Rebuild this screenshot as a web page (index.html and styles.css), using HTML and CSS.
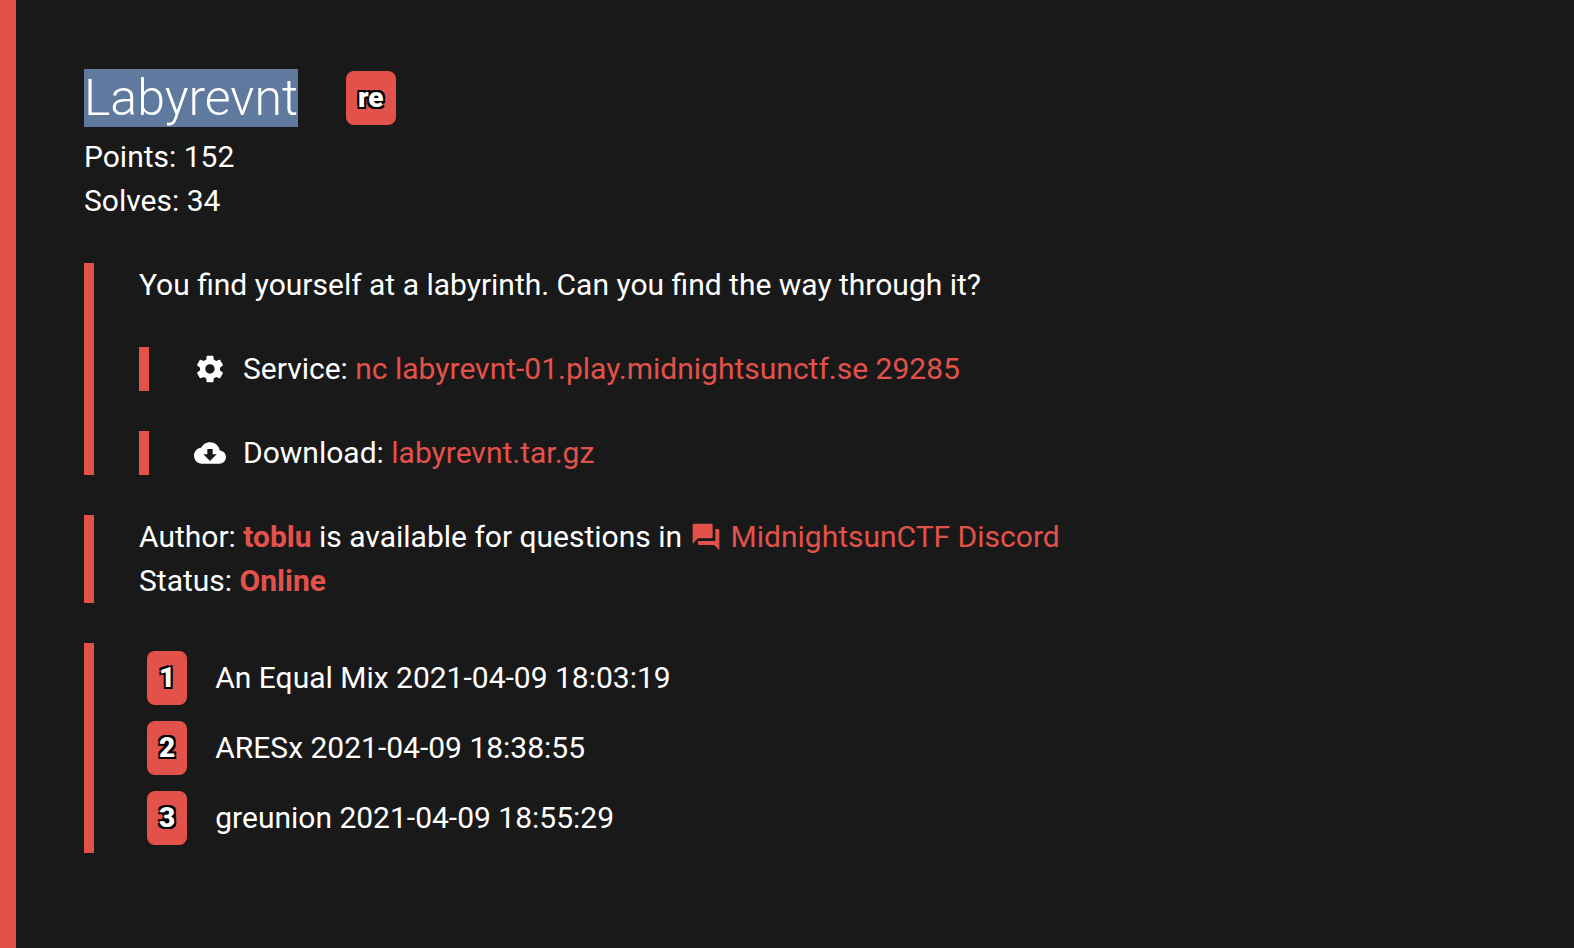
FILE: index.html
```html
<!DOCTYPE html>
<html lang="en">
<head>
<meta charset="utf-8">
<meta name="viewport" content="width=device-width, initial-scale=1">
<title>Labyrevnt</title>
<link rel="stylesheet" href="styles.css">
</head>
<body>
<main class="challenge">
  <header>
    <div class="heading">
      <h1 class="title"><mark class="selected">Labyrevnt</mark></h1>
      <span class="badge">re</span>
    </div>
    <p class="line">Points: 152</p>
    <p class="line">Solves: 34</p>
  </header>

  <section class="block details">
    <p class="line">You find yourself at a labyrinth. Can you find the way through it?</p>
    <div class="block resource">
      <svg class="icon" viewBox="0 0 24 24" aria-hidden="true"><path d="M19.43 12.98c.04-.32.07-.64.07-.98s-.03-.66-.07-.98l2.11-1.65c.19-.15.24-.42.12-.64l-2-3.46c-.12-.22-.39-.3-.61-.22l-2.49 1c-.52-.4-1.08-.73-1.69-.98l-.38-2.65C14.46 2.18 14.25 2 14 2h-4c-.25 0-.46.18-.49.42l-.38 2.65c-.61.25-1.17.59-1.69.98l-2.49-1c-.23-.09-.49 0-.61.22l-2 3.46c-.13.22-.07.49.12.64l2.11 1.65c-.04.32-.07.65-.07.98s.03.66.07.98l-2.11 1.65c-.19.15-.24.42-.12.64l2 3.46c.12.22.39.3.61.22l2.49-1c.52.4 1.08.73 1.69.98l.38 2.65c.03.24.24.42.49.42h4c.25 0 .46-.18.49-.42l.38-2.65c.61-.25 1.17-.59 1.69-.98l2.49 1c.23.09.49 0 .61-.22l2-3.46c.12-.22.07-.49-.12-.64l-2.11-1.65zM12 15.5c-1.93 0-3.500-1.570-3.500-3.500s1.570-3.500 3.500-3.500 3.500 1.570 3.500 3.500-1.570 3.500-3.500 3.500z"/></svg>
      <p class="line">Service: <a class="link" href="#service">nc labyrevnt-01.play.midnightsunctf.se 29285</a></p>
    </div>
    <div class="block resource">
      <svg class="icon" viewBox="0 0 24 24" aria-hidden="true"><path d="M19.350 10.040C18.670 6.590 15.640 4 12 4 9.110 4 6.600 5.640 5.350 8.040 2.340 8.360 0 10.910 0 14c0 3.310 2.690 6 6 6h13c2.760 0 5-2.240 5-5 0-2.640-2.050-4.780-4.650-4.960zM17 13l-5 5-5-5h3V9h4v4h3z"/></svg>
      <p class="line">Download: <a class="link" href="#download">labyrevnt.tar.gz</a></p>
    </div>
  </section>

  <section class="block">
    <p class="line">Author: <strong class="accent">toblu</strong> is available for questions in <a class="link" href="#discord"><svg class="icon chat" viewBox="0 0 24 24" aria-hidden="true"><path d="M21 6h-2v9H6v2c0 .55.45 1 1 1h11l4 4V7c0-.55-.45-1-1-1zm-4 6V3c0-.55-.45-1-1-1H3c-.55 0-1 .45-1 1v14l4-4h10c.55 0 1-.45 1-1z"/></svg>MidnightsunCTF Discord</a></p>
    <p class="line">Status: <strong class="accent">Online</strong></p>
  </section>

  <ol class="block solvers">
    <li class="solver"><span class="badge">1</span><span>An Equal Mix 2021-04-09 18:03:19</span></li>
    <li class="solver"><span class="badge">2</span><span>ARESx 2021-04-09 18:38:55</span></li>
    <li class="solver"><span class="badge">3</span><span>greunion 2021-04-09 18:55:29</span></li>
  </ol>
</main>
</body>
</html>
```
FILE: styles.css
```css
:root {
  --accent: #e3524a;
  --surface: #191919;
}

* {
  box-sizing: border-box;
}

body {
  margin: 0;
  background: var(--surface);
  color: #fff;
  font: 400 30px/44px Roboto, sans-serif;
}

.challenge {
  display: flex;
  flex-direction: column;
  gap: 40px;
  min-height: 100vh;
  padding: 61px 68px;
  border-left: 16px solid var(--accent);
}

.heading {
  display: flex;
  align-items: center;
  gap: 48px;
}

.title {
  margin: 0;
  font-size: 50px;
  font-weight: 300;
  line-height: 74px;
}

.selected {
  background: #5f7a9e;
  color: #fff;
}

.line {
  margin: 0;
}

.block {
  margin: 0;
  padding: 0 0 0 45px;
  border-left: 10px solid var(--accent);
}

.details {
  display: flex;
  flex-direction: column;
  gap: 40px;
}

.resource {
  display: flex;
  align-items: center;
  gap: 17px;
}

.icon {
  flex: none;
  width: 32px;
  height: 32px;
  fill: currentColor;
}

.chat {
  margin-right: 9px;
  vertical-align: -6px;
}

.link {
  color: var(--accent);
  text-decoration: none;
}

.accent {
  color: var(--accent);
  font-weight: 700;
}

.badge {
  padding: 0 12px;
  border-radius: 8px;
  background: var(--accent);
  font-size: 28px;
  font-weight: 900;
  line-height: 54px;
  text-shadow: -2px -2px 0 #000, 2px -2px 0 #000, -2px 2px 0 #000, 2px 2px 0 #000;
}

.solvers {
  list-style: none;
}

.solver {
  display: flex;
  align-items: center;
  gap: 28px;
  padding: 8px;
}
```
